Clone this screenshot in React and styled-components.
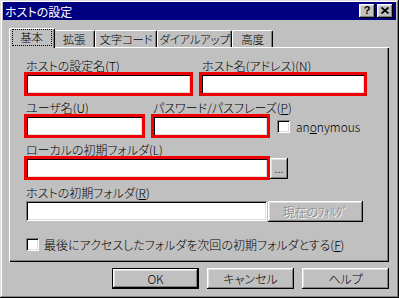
import React from 'react';
import styled, { createGlobalStyle } from 'styled-components';

const Global = createGlobalStyle`
  html, body { margin: 0; padding: 0; background: #c0c0c0; }
  body {
    font-family: "Noto Sans CJK JP", "Noto Sans", sans-serif;
    font-size: 12px;
    font-weight: 300;
    font-feature-settings: "palt";
    color: #000;
  }
  * { box-sizing: border-box; }
`;

const raised = `
  box-shadow: inset -1px -1px #000, inset 1px 1px #fff, inset -2px -2px #808080, inset 2px 2px #dfdfdf;
`;
const sunken = `
  box-shadow: inset 1px 1px #808080, inset -1px -1px #fff, inset 2px 2px #000, inset -2px -2px #dfdfdf;
`;

const Window = styled.div`
  width: 399px;
  height: 298px;
  background: #c0c0c0;
  padding: 2px 3px 3px 3px;
  box-shadow: inset -1px -1px #000, inset 1px 1px #dfdfdf, inset -2px -2px #808080, inset 2px 2px #fff;
  display: flex;
  flex-direction: column;
`;

const TitleBar = styled.div`
  height: 18px;
  background: #000080;
  color: #fff;
  display: flex;
  align-items: center;
  padding: 0 3px 0 2px;
`;

const Title = styled.div`
  flex: 1;
  font-size: 12px;
  font-weight: 400;
  line-height: 13px;
  white-space: nowrap;
`;

const TitleButton = styled.div`
  width: 16px;
  height: 14px;
  margin-left: ${p => p.$gap || 0}px;
  background: #c0c0c0;
  ${raised}
  display: flex;
  align-items: center;
  justify-content: center;
  color: #000;
  font-family: "Liberation Sans", sans-serif;
  font-weight: bold;
  font-size: 11px;
  line-height: 11px;
  padding-bottom: 1px;
`;

const Body = styled.div`
  margin: 8px 7px 0 6px;
  display: flex;
  flex-direction: column;
`;

const TabRow = styled.div`
  height: 19px;
  display: flex;
  align-items: flex-end;
  padding-left: 2px;
`;

const Tab = styled.div`
  position: relative;
  width: ${p => (p.$active ? p.$w + 4 : p.$w)}px;
  height: ${p => (p.$active ? 20 : 17)}px;
  margin: ${p => (p.$active ? '0 -2px -1px -2px' : '0')};
  z-index: ${p => (p.$active ? 2 : 1)};
  background: #c0c0c0;
  border-top: 1px solid #fff;
  border-left: 1px solid #fff;
  border-right: 1px solid #000;
  border-radius: 2px 2px 0 0;
  box-shadow: inset -1px 0 #808080;
  display: flex;
  align-items: ${p => (p.$active ? 'flex-start' : 'center')};
  padding-top: ${p => (p.$active ? 1 : 0)}px;
  justify-content: center;
  white-space: nowrap;
  line-height: 13px;
  font-size: 11.5px;
  letter-spacing: -0.3px;
`;

const Focus = styled.span`
  outline: 1px dotted #000;
  outline-offset: 0;
  padding: 1px 8px 1px 7px;
`;

const Panel = styled.div`
  height: 215px;
  background: #c0c0c0;
  box-shadow: inset 1px 1px #fff, inset -1px -1px #000, inset -2px -2px #808080;
  padding: 12px 0 0 17px;
  display: flex;
  flex-direction: column;
  gap: 7px;
`;

const Row = styled.div`
  display: flex;
  align-items: flex-end;
  gap: ${p => p.$gap || 0}px;
  margin-top: ${p => p.$mt || 0}px;
`;

const Group = styled.div`
  display: flex;
  flex-direction: column;
  gap: 2px;
  width: ${p => (p.$w ? `${p.$w}px` : 'auto')};
  flex: none;
`;

const Label = styled.div`
  line-height: 13px;
  height: 13px;
  white-space: nowrap;
  padding-left: ${p => p.$ml || 0}px;
`;

const InputRow = styled.div`
  display: flex;
  align-items: flex-start;
  gap: ${p => p.$gap || 0}px;
`;

const Field = styled.div`
  width: ${p => p.$w}px;
  height: 20px;
  background: #fff;
  ${sunken}
  outline: ${p => (p.$marked ? '3px solid #f00000' : 'none')};
  outline-offset: -1px;
`;

const PushButton = styled.div`
  width: ${p => p.$w}px;
  height: ${p => p.$h || 21}px;
  background: #c0c0c0;
  ${raised}
  display: flex;
  align-items: ${p => (p.$bottom ? 'flex-end' : 'center')};
  justify-content: center;
  white-space: nowrap;
  line-height: 13px;
  padding-bottom: ${p => (p.$bottom ? 5 : 0)}px;
  color: ${p => (p.$disabled ? '#808080' : '#000')};
  text-shadow: ${p => (p.$disabled ? '1px 1px #fff' : 'none')};
`;

const DefaultFrame = styled.div`
  border: 1px solid #000;
  display: flex;
`;

const CheckWrap = styled.div`
  height: 20px;
  display: flex;
  align-items: center;
  gap: ${p => p.$gap || 5}px;
  margin-left: ${p => p.$ml || 0}px;
  white-space: nowrap;
  line-height: 13px;
`;

const CheckBox = styled.div`
  width: 13px;
  height: 13px;
  background: #fff;
  ${sunken}
  flex: none;
`;

const ButtonRow = styled.div`
  margin-top: 6px;
  display: flex;
  justify-content: flex-end;
  gap: 8px;
`;

export default function App() {
  return (
    <>
      <Global />
      <Window>
        <TitleBar>
          <Title>ホストの設定</Title>
          <TitleButton>?</TitleButton>
          <TitleButton $gap={2}>
            <svg width="8" height="7" viewBox="0 0 8 7">
              <path d="M0.5 0.5 L7.5 6.5 M7.5 0.5 L0.5 6.5" stroke="#000" strokeWidth="1.7" fill="none" />
            </svg>
          </TitleButton>
        </TitleBar>
        <Body>
          <TabRow>
            <Tab $active $w={42}><Focus>基本</Focus></Tab>
            <Tab $w={42}>拡張</Tab>
            <Tab $w={62}>文字コード</Tab>
            <Tab $w={75}>ダイアルアップ</Tab>
            <Tab $w={41}>高度</Tab>
          </TabRow>
          <Panel>
            <Row $gap={10}>
              <Group $w={165}>
                <Label>ホストの設定名(<u>T</u>)</Label>
                <Field $w={165} $marked />
              </Group>
              <Group $w={164}>
                <Label $ml={1}>ホスト名(アドレス)(<u>N</u>)</Label>
                <Field $w={164} $marked />
              </Group>
            </Row>
            <Row $gap={10}>
              <Group $w={117}>
                <Label>ユーザ名(<u>U</u>)</Label>
                <Field $w={117} $marked />
              </Group>
              <Group $w={115}>
                <Label $ml={-1}>パスワード/パスフレーズ(<u>P</u>)</Label>
                <Field $w={115} $marked />
              </Group>
              <CheckWrap $gap={6} $ml={-1}>
                <CheckBox />
                <span>an<u>o</u>nymous</span>
              </CheckWrap>
            </Row>
            <Group>
              <Label>ローカルの初期フォルダ(<u>L</u>)</Label>
              <InputRow $gap={2}>
                <Field $w={242} $marked />
                <PushButton $w={18} $bottom>...</PushButton>
              </InputRow>
            </Group>
            <Group>
              <Label>ホストの初期フォルダ(<u>R</u>)</Label>
              <InputRow $gap={1}>
                <Field $w={241} />
                <PushButton $w={95} $disabled>現在のﾌｫﾙﾀﾞ</PushButton>
              </InputRow>
            </Group>
            <Row $mt={5}>
              <CheckWrap $gap={5}>
                <CheckBox />
                <span>最後にアクセスしたフォルダを次回の初期フォルダとする(<u>F</u>)</span>
              </CheckWrap>
            </Row>
          </Panel>
          <ButtonRow>
            <DefaultFrame>
              <PushButton $w={85} $h={19}>OK</PushButton>
            </DefaultFrame>
            <PushButton $w={87}>キャンセル</PushButton>
            <PushButton $w={87}>ヘルプ</PushButton>
          </ButtonRow>
        </Body>
      </Window>
    </>
  );
}
